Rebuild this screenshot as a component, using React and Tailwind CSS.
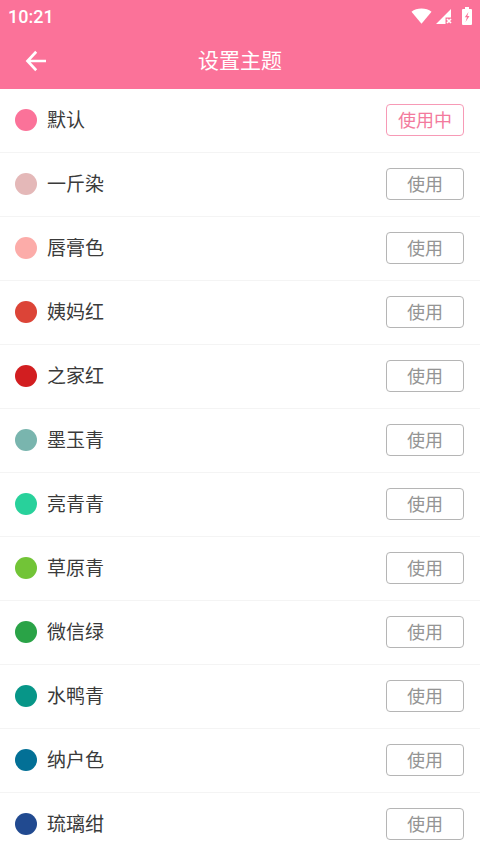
import React, { useState } from 'react'

const THEMES = [
  { id: 'default', name: '默认', dot: 'bg-[#fb7299]' },
  { id: 'yijinran', name: '一斤染', dot: 'bg-[#e4b8b8]' },
  { id: 'lip', name: '唇膏色', dot: 'bg-[#fcaca9]' },
  { id: 'aunt', name: '姨妈红', dot: 'bg-[#dc4437]' },
  { id: 'home', name: '之家红', dot: 'bg-[#d21e20]' },
  { id: 'jade', name: '墨玉青', dot: 'bg-[#79b5ae]' },
  { id: 'bright', name: '亮青青', dot: 'bg-[#28d19b]' },
  { id: 'grass', name: '草原青', dot: 'bg-[#72c437]' },
  { id: 'wechat', name: '微信绿', dot: 'bg-[#2aa347]' },
  { id: 'teal', name: '水鸭青', dot: 'bg-[#079688]' },
  { id: 'nahu', name: '纳户色', dot: 'bg-[#037096]' },
  { id: 'glaze', name: '琉璃绀', dot: 'bg-[#214a90]' },
]

function StatusBar(){
  return (
    <div className="flex h-8 items-center justify-between px-2">
      <span className="pt-0.5 text-lg font-medium">10:21</span>
      <div className="flex items-center">
        <svg className="mr-1 h-4 w-[21px]" viewBox="0 0 22 16" fill="currentColor" aria-hidden="true">
          <path d="M11 16 0.5 3.500C3.300 1.300 7 0.200 11 0.200s7.700 1.100 10.500 3.300z" />
        </svg>
        <svg className="mr-2.5 h-4 w-4" viewBox="0 0 16 16" fill="currentColor" aria-hidden="true">
          <path d="M15 1v8.500H9.500V16H0z" />
          <path d="m11 11 4 4m0-4-4 4" fill="none" stroke="currentColor" strokeWidth="1.700" />
        </svg>
        <svg className="h-[18px] w-[10px]" viewBox="0 0 10 18" fill="currentColor" fillRule="evenodd" aria-hidden="true">
          <path d="M3 0h4v2h2q1 0 1 1v14q0 1-1 1H1q-1 0-1-1V3q0-1 1-1h2zM6.500 5 2.800 10.200H5L3.500 15 7.500 9H5.300z" />
        </svg>
      </div>
    </div>
  )
}

function ThemeRow({theme, active, onUse}){
  return (
    <li className="flex h-16 shrink-0 items-center border-b border-[#f4f4f4] px-4 pb-px">
      <span className={`-ml-px mr-2.5 size-[22px] rounded-full ${theme.dot}`} />
      <span className="flex-1 pt-0.5 text-[19px] leading-7 text-[#3a3a3a]">{theme.name}</span>
      <button
        type="button"
        aria-label={`${theme.name} ${active ? '使用中' : '使用'}`}
        onClick={onUse}
        className={`h-8 w-[78px] rounded border pt-0.5 text-lg leading-7 ${active ? 'border-[#f79ab6] text-[#f37a9d]' : 'border-[#b5b5b5] text-[#949494]'}`}
      >
        {active ? '使用中' : '使用'}
      </button>
    </li>
  )
}

export default function App(){
  const [current, setCurrent] = useState('default')

  return (
    <div className="flex h-screen flex-col overflow-hidden bg-white font-[Roboto,'Noto_Sans_CJK_SC',sans-serif]">
      <header className="shrink-0 bg-[#fb7299] text-white">
        <StatusBar />
        <div className="grid h-[57px] grid-cols-[72px_1fr_72px] items-center">
          <button type="button" aria-label="返回" className="flex h-full items-center justify-center">
            <svg className="size-6" viewBox="0 0 24 24" fill="none" stroke="currentColor" strokeWidth="2.700" aria-hidden="true">
              <path d="M22 12H3.500M12.200 2.800 3.500 12l8.700 9.200" />
            </svg>
          </button>
          <h1 className="text-center text-[21px] leading-8">设置主题</h1>
        </div>
      </header>
      <ul className="flex min-h-0 flex-1 flex-col overflow-y-auto [scrollbar-width:none]">
        {THEMES.map(t=> (
          <ThemeRow key={t.id} theme={t} active={t.id === current} onUse={()=> setCurrent(t.id)} />
        ))}
      </ul>
    </div>
  )
}
